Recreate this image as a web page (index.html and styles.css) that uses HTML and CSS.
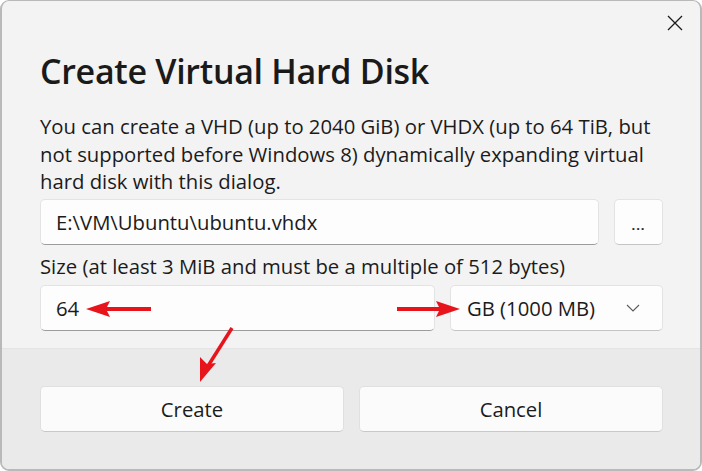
FILE: index.html
```html
<!DOCTYPE html>
<html lang="en">
  <head>
    <meta charset="UTF-8" />
    <meta name="viewport" content="width=device-width, initial-scale=1.0" />
    <title>Create Virtual Hard Disk</title>
    <link rel="stylesheet" href="styles.css">
  </head>
  <body>
    <div class="dialog">
      <div class="content">
        <div class="titlebar">
          <button type="button" class="close" aria-label="Close">
            <svg width="16" height="16" viewBox="0 0 16 16">
              <path d="M1 1 L15 15 M15 1 L1 15" stroke="#1b1b1b" stroke-width="1.3" fill="none" />
            </svg>
          </button>
        </div>

        <h2>Create Virtual Hard Disk</h2>
        <p class="intro">
          You can create a VHD (up to 2040 GiB) or VHDX (up to 64 TiB, but
          not supported before Windows 8) dynamically expanding virtual
          hard disk with this dialog.
        </p>

        <div class="row">
          <input type="text" class="field path" value="E:\VM\Ubuntu\ubuntu.vhdx" />
          <button type="button" class="browse">...</button>
        </div>

        <label class="size-label" for="size">Size (at least 3 MiB and must be a multiple of 512 bytes)</label>
        <div class="row row-size">
          <input type="text" id="size" class="field size" value="64" />
          <div class="select">
            <span>GB (1000 MB)</span>
            <svg width="14" height="8" viewBox="0 0 14 8">
              <path d="M1 1 L7 7 L13 1" stroke="#5c5c5c" stroke-width="1.1" fill="none" />
            </svg>
          </div>
        </div>
      </div>

      <div class="footer">
        <button type="button" class="action">Create</button>
        <button type="button" class="action">Cancel</button>
      </div>

      <!-- red annotation arrows drawn over the dialog -->
      <svg class="marks" width="702" height="471" viewBox="0 0 702 471">
        <g fill="#e8141b" stroke="#e8141b">
          <line x1="151" y1="309" x2="104" y2="309" stroke-width="4" />
          <polygon points="86,309 110,301 106,309 110,317" stroke="none" />
          <line x1="397" y1="309" x2="442" y2="309" stroke-width="4" />
          <polygon points="460,309 436,301 440,309 436,317" stroke="none" />
          <line x1="232" y1="328" x2="208" y2="366" stroke-width="3.5" />
          <polygon points="200,382 200,357 207,364 216,363" stroke="none" />
        </g>
      </svg>
    </div>
  </body>
</html>
```

FILE: styles.css
```css
body {
  margin: 0;
  padding: 0;
  background: #ffffff;
  font-family: "Open Sans", "Noto Sans", sans-serif;
  color: #1b1b1b;
}

.dialog {
  position: relative;
  box-sizing: border-box;
  width: 702px;
  height: 471px;
  display: flex;
  flex-direction: column;
  border: 2px solid #b9b9b9;
  border-top-width: 1px;
  border-radius: 9px;
  background: #f3f3f3;
  overflow: hidden;
}

.content {
  padding: 0 37px 17px 38px;
}

.titlebar {
  display: flex;
  justify-content: flex-end;
  height: 43px;
  margin-right: -37px;
}

.close {
  width: 50px;
  height: 43px;
  padding: 0;
  border: none;
  background: none;
  display: flex;
  align-items: center;
  justify-content: center;
}

h2 {
  margin: 5px 0 0;
  font-size: 34px;
  font-weight: 600;
  line-height: 44px;
  letter-spacing: -0.3px;
  color: #1a1a1a;
}

.intro {
  margin: 20px 0 0;
  font-size: 20.3px;
  line-height: 27.5px;
}

.row {
  display: flex;
  gap: 15px;
  margin-top: 3.5px;
}

.row-size {
  margin-top: 5px;
}

.field,
.browse,
.select,
.action {
  box-sizing: border-box;
  height: 46px;
  border: 1px solid #e3e3e3;
  border-bottom-color: #c4c4c4;
  border-radius: 5px;
  background: #fdfdfd;
  font-family: inherit;
  font-size: 20.3px;
  color: #1b1b1b;
}

.field {
  padding: 0 15px;
  outline: none;
}

.field.path {
  flex: 1;
  border-bottom: 1px solid #9c9c9c;
}

.browse {
  width: 49px;
  padding: 6px 0 0;
  font-size: 13px;
  font-weight: 700;
  letter-spacing: 1px;
  color: #2a2a2a;
}

.size-label {
  display: block;
  margin-top: 7px;
  font-size: 20.3px;
  line-height: 28px;
}

.field.size {
  width: 395px;
  border-bottom: 1px solid #9c9c9c;
}

.select {
  flex: 1;
  display: flex;
  align-items: center;
  justify-content: space-between;
  padding: 0 22px 0 16px;
}

.footer {
  flex: 1;
  display: flex;
  gap: 15px;
  padding: 37px 37px 0 38px;
  border-top: 1px solid #e4e4e4;
  background: #eaeaea;
}

.action {
  flex: 1;
  background: #fbfbfb;
  border-color: #e0e0e0;
  border-bottom-color: #c8c8c8;
}

.marks {
  position: absolute;
  left: -2px;
  top: -1px;
  pointer-events: none;
}
```
